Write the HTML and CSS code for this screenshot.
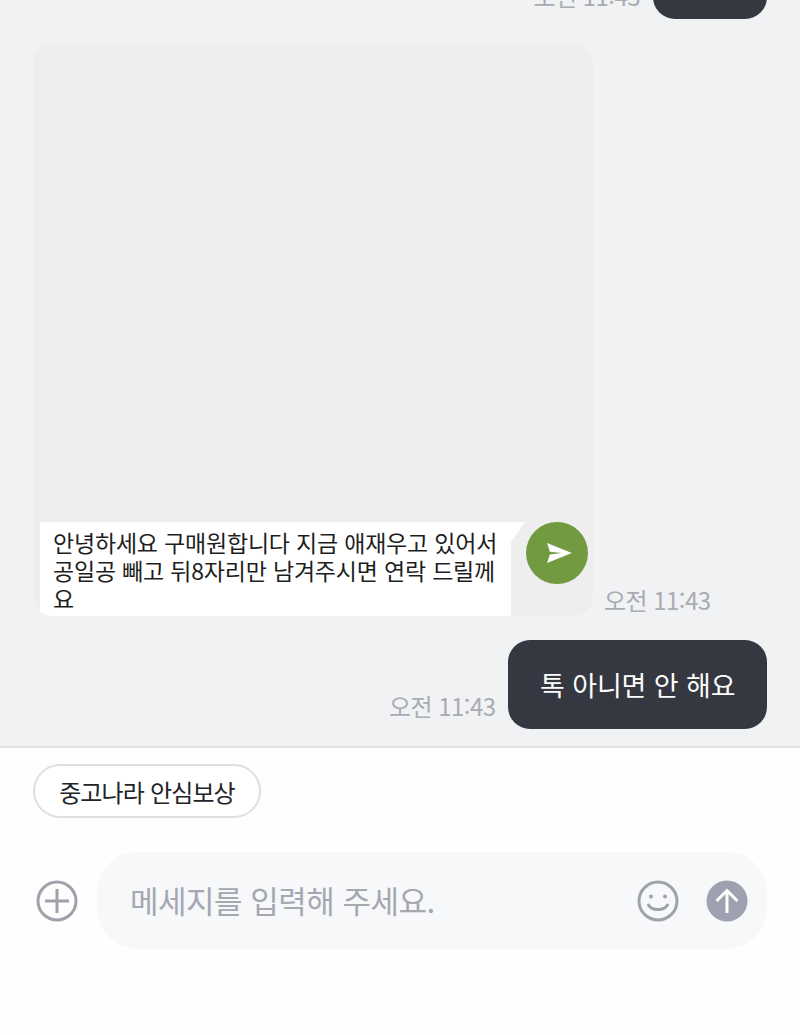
FILE: index.html
```html
<!DOCTYPE html>
<html lang="ko">
<head>
    <meta charset="UTF-8">
    <meta name="viewport" content="width=device-width, initial-scale=1.0">
    <title>채팅</title>
    <link rel="stylesheet" href="styles.css">
</head>
<body>
    <div id="chat">
        <div class="row row-me row-first">
            <span class="time">오전 11:43</span>
            <div class="bubble bubble-cut"></div>
        </div>

        <div class="row row-other">
            <div class="photo">
                <div class="photo-text">안녕하세요 구매원합니다 지금 애재우고 있어서 공일공 빼고 뒤8자리만 남겨주시면 연락 드릴께요</div>
                <div class="photo-send">
                    <svg width="28" height="22" viewBox="0 0 30 24">
                        <path d="M2 1 L29 12 L2 23 L5 13.5 L18 12 L5 10.5 Z" fill="#fff"/>
                    </svg>
                </div>
            </div>
            <span class="time">오전 11:43</span>
        </div>

        <div class="row row-me">
            <span class="time">오전 11:43</span>
            <div class="bubble">톡 아니면 안 해요</div>
        </div>
    </div>

    <div id="bottom">
        <button class="chip">중고나라 안심보상</button>

        <div class="input-row">
            <svg class="icon-plus" width="42" height="42" viewBox="0 0 42 42" fill="none" stroke="#a0a2ab" stroke-width="3">
                <circle cx="21" cy="21" r="19"/>
                <path d="M21 9 V33 M9 21 H33"/>
            </svg>
            <div class="input-box">
                <span class="placeholder">메세지를 입력해 주세요.</span>
                <svg width="42" height="42" viewBox="0 0 42 42" fill="none" stroke="#a0a2ab" stroke-width="3">
                    <circle cx="21" cy="21" r="19"/>
                    <circle cx="14" cy="16.5" r="2" fill="#a0a2ab" stroke="none"/>
                    <circle cx="28" cy="16.5" r="2" fill="#a0a2ab" stroke="none"/>
                    <path d="M11.5 25 C15 31 27 31 30.5 25" stroke-linecap="round"/>
                </svg>
                <svg class="icon-up" width="42" height="42" viewBox="0 0 42 42" fill="none" stroke="#fff" stroke-width="3">
                    <circle cx="21" cy="21" r="20.5" fill="#9ea1b0" stroke="none"/>
                    <path d="M21 33 V11 M10.5 21 L21 10.5 L31.5 21"/>
                </svg>
            </div>
        </div>
    </div>
</body>
</html>
```

FILE: styles.css
```css
* {
    box-sizing: border-box;
}

body {
    font-family: 'Noto Sans CJK KR', 'Noto Sans', sans-serif;
    margin: 0;
    height: 1035px;
    overflow: hidden;
    background-color: #fefefe;
}

/* bottom aligned, so the oldest message gets cut off at the top */
#chat {
    height: 748px;
    padding: 0 33px 17px 33px;
    display: flex;
    flex-direction: column;
    justify-content: flex-end;
    overflow: hidden;
    background-color: #f1f2f4;
    border-bottom: 2px solid #e1e2e6;
}

.row {
    display: flex;
    align-items: flex-end;
    flex-shrink: 0;
}

.row-me {
    justify-content: flex-end;
}

.row-first {
    margin-bottom: 24px;
}

.row-other {
    margin-bottom: 24px;
}

.time {
    font-size: 24px;
    line-height: 30px;
    letter-spacing: -0.55px;
    color: #a9abb3;
    white-space: nowrap;
}

.row-me .time {
    margin-right: 13px;
    margin-bottom: 8px;
}

.row-other .time {
    margin-left: 11px;
    margin-bottom: 1px;
}

.bubble {
    height: 89px;
    padding: 0 31.5px;
    display: flex;
    align-items: center;
    font-size: 27px;
    letter-spacing: -0.1px;
    color: #fdfdfe;
    background-color: #353840;
    border-radius: 22px;
}

.bubble-cut {
    width: 114px;
}

.photo {
    width: 560px;
    height: 573px;
    padding-left: 7px;
    display: flex;
    align-items: flex-end;
    background-color: #eeeeee;
    border-radius: 20px;
    overflow: hidden;
}

/* wider than the white part, the clip makes the slanted tail at top right */
.photo-text {
    width: 485px;
    height: 94px;
    padding: 6px 24px 0 13px;
    font-size: 23px;
    line-height: 28px;
    letter-spacing: -0.2px;
    color: #1e1e1e;
    background-color: #ffffff;
    clip-path: polygon(0 0, 100% 0, 471px 20px, 471px 100%, 0 100%);
}

.photo-send {
    width: 62px;
    height: 62px;
    margin: 0 0 32px 1px;
    padding-left: 4px;
    display: flex;
    align-items: center;
    justify-content: center;
    background-color: #729a40;
    border-radius: 50%;
}

#bottom {
    padding: 16px 33px 0 33px;
}

.chip {
    display: block;
    width: 228px;
    height: 54px;
    padding: 0;
    font-family: inherit;
    font-size: 24px;
    letter-spacing: -0.85px;
    color: #222327;
    background-color: #ffffff;
    border: 2px solid #dedfe2;
    border-radius: 27px;
}

.input-row {
    margin-top: 34px;
    display: flex;
    align-items: center;
    gap: 19px;
}

.icon-plus {
    margin-left: 3px;
    flex-shrink: 0;
}

.input-box {
    flex: 1;
    height: 97px;
    padding: 0 19px 0 33px;
    display: flex;
    align-items: center;
    gap: 27px;
    background-color: #f7f8fa;
    border-radius: 40px;
}

.placeholder {
    flex: 1;
    padding-bottom: 2px;
    font-size: 31px;
    letter-spacing: -0.5px;
    color: #a5a7b1;
}
```
